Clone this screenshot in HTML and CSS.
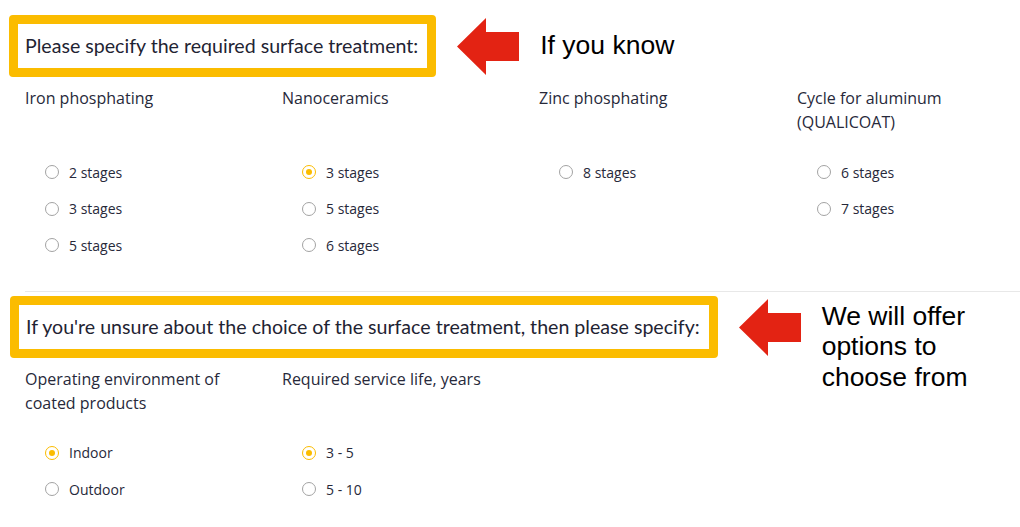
FILE: index.html
```html
<!DOCTYPE html>
<html lang="en">
<head>
    <meta charset="UTF-8">
    <meta name="viewport" content="width=device-width, initial-scale=1.0">
    <title>Surface treatment</title>
    <link rel="stylesheet" href="styles.css">
</head>
<body>
    <div class="form">
        <div class="head-row">
            <div class="question">Please specify the required surface treatment:</div>
            <svg class="arrow" width="62" height="57" viewBox="0 0 62 57"><polygon points="0,28.5 29,0 29,14 62,14 62,43 29,43 29,57" fill="#e32313"/></svg>
            <div class="note note-one">If you know</div>
        </div>
        <div class="options">
            <div class="group">
                <div class="group-title">Iron phosphating</div>
                <ul class="choices">
                    <li><label><input type="radio" name="iron">2 stages</label></li>
                    <li><label><input type="radio" name="iron">3 stages</label></li>
                    <li><label><input type="radio" name="iron">5 stages</label></li>
                </ul>
            </div>
            <div class="group">
                <div class="group-title">Nanoceramics</div>
                <ul class="choices">
                    <li><label><input type="radio" name="nano" checked>3 stages</label></li>
                    <li><label><input type="radio" name="nano">5 stages</label></li>
                    <li><label><input type="radio" name="nano">6 stages</label></li>
                </ul>
            </div>
            <div class="group">
                <div class="group-title">Zinc phosphating</div>
                <ul class="choices">
                    <li><label><input type="radio" name="zinc">8 stages</label></li>
                </ul>
            </div>
            <div class="group">
                <div class="group-title">Cycle for aluminum (QUALICOAT)</div>
                <ul class="choices">
                    <li><label><input type="radio" name="alu">6 stages</label></li>
                    <li><label><input type="radio" name="alu">7 stages</label></li>
                </ul>
            </div>
        </div>

        <div class="divider"></div>

        <div class="head-row head-row-two">
            <div class="question">If you're unsure about the choice of the surface treatment, then please specify:</div>
            <svg class="arrow" width="62" height="57" viewBox="0 0 62 57"><polygon points="0,28.5 29,0 29,14 62,14 62,43 29,43 29,57" fill="#e32313"/></svg>
            <div class="note note-two">We will offer<br>options to<br>choose from</div>
        </div>
        <div class="options">
            <div class="group">
                <div class="group-title">Operating environment of coated products</div>
                <ul class="choices">
                    <li><label><input type="radio" name="env" checked>Indoor</label></li>
                    <li><label><input type="radio" name="env">Outdoor</label></li>
                </ul>
            </div>
            <div class="group">
                <div class="group-title">Required service life, years</div>
                <ul class="choices">
                    <li><label><input type="radio" name="life" checked>3 - 5</label></li>
                    <li><label><input type="radio" name="life">5 - 10</label></li>
                </ul>
            </div>
        </div>
    </div>
</body>
</html>
```
FILE: styles.css
```css
*{
    margin: 0;
    padding: 0;
    list-style: none;
    box-sizing: border-box;
}
body{
    background: #fff;
    color: #27293a;
    font-family: "Open Sans", "Liberation Sans", sans-serif;
    overflow: hidden;
}
.form{
    padding: 15px 0 0 9px;
}
.head-row{
    display: flex;
    align-items: flex-start;
    gap: 21px;
    height: 62px;
}
.head-row-two{
    margin-left: 1px;
}
.question{
    border: 9px solid #fbbc00;
    border-radius: 4px;
    padding: 0 9px 0 7px;
    height: 62px;
    line-height: 44px;
    font-family: Lato, "Open Sans", sans-serif;
    font-size: 19.6px;
    color: #1f2433;
    white-space: nowrap;
}
.arrow{
    display: block;
    margin-top: 3px;
    flex: none;
}
.note{
    font-family: "Liberation Sans", Arial, sans-serif;
    font-size: 26.5px;
    line-height: 30.5px;
    color: #000;
    flex: none;
}
.note-one{
    margin-top: 15px;
}
.note-two{
    margin-top: 5px;
}
.options{
    display: grid;
    grid-template-columns: 257px 257px 258px minmax(0, 1fr);
    padding-left: 16px;
    margin-top: 9px;
}
.group{
    padding-right: 20px;
}
.group-title{
    font-size: 16px;
    line-height: 24px;
    min-height: 48px;
    margin-bottom: 20px;
}
.choices{
    padding-left: 20px;
}
.choices li{
    height: 36.5px;
}
.choices label{
    display: flex;
    align-items: center;
    height: 36px;
    font-size: 14px;
    gap: 10px;
}
.choices input{
    appearance: none;
    -webkit-appearance: none;
    width: 14px;
    height: 14px;
    border: 1px solid #a3a3a3;
    border-radius: 50%;
    background: #fff;
    position: relative;
    flex: none;
    margin: 0;
}
.choices input:checked{
    border: 1.5px solid #fbbc00;
}
.choices input:checked::after{
    content: "";
    position: absolute;
    left: 50%;
    top: 50%;
    width: 6px;
    height: 6px;
    margin: -3px 0 0 -3px;
    border-radius: 50%;
    background: #fbbc00;
}
.divider{
    margin: 27px 0 4px 16px;
    border-top: 1px solid #e8e8e8;
}
```
